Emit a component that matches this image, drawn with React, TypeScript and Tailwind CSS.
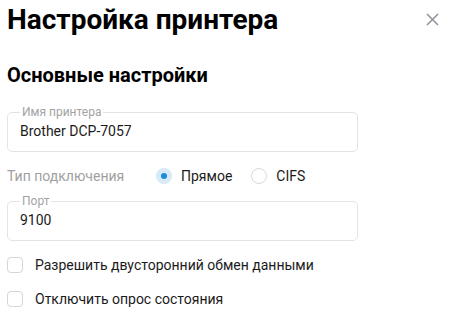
import React from 'react';

const font = { fontFamily: 'Roboto, "Noto Sans", sans-serif' };

function OutlinedField({ label, value }: { label: string; value: string }) {
  return (
    <fieldset className="w-[351px] h-[47px] border border-[#e3e3e3] rounded-[5px] px-[12px] m-0">
      <legend className="px-[2px] text-[12px] leading-[14px] text-[#a3a3a3]">{label}</legend>
      <div className="mt-[2px] text-[14px] leading-[20px] text-[#1b1b1b]">{value}</div>
    </fieldset>
  );
}

function Radio({ checked, label }: { checked?: boolean; label: string }) {
  return (
    <label className="flex items-center gap-[9px]">
      {checked ? (
        <span className="w-[16px] h-[16px] rounded-full bg-[#d6eaf8] flex items-center justify-center">
          <span className="w-[6px] h-[6px] rounded-full bg-[#1a8ad9]" />
        </span>
      ) : (
        <span className="w-[16px] h-[16px] rounded-full border border-[#d9d9d9] bg-white" />
      )}
      <span className="text-[14px] text-[#1b1b1b]">{label}</span>
    </label>
  );
}

function Checkbox({ label }: { label: string }) {
  return (
    <label className="flex items-center gap-[12px] h-[16px]">
      <span className="w-[16px] h-[16px] rounded-[4px] border border-[#d6d6d6] bg-white" />
      <span className="text-[14px] text-[#1b1b1b]">{label}</span>
    </label>
  );
}

export default function App() {
  return (
    <div className="w-[450px] h-[320px] bg-white overflow-hidden pl-[7px]" style={font}>
      <div className="flex items-center justify-between h-[36px] mt-[2px] pr-[11px]">
        <h1 className="text-[28px] leading-[36px] font-bold text-black">Настройка принтера</h1>
        <svg width="13" height="13" viewBox="0 0 13 13" className="text-[#8d9196] -mt-[1px]">
          <path d="M1 1L12 12M12 1L1 12" stroke="currentColor" strokeWidth="1.5" />
        </svg>
      </div>

      <h2 className="mt-[23px] text-[20px] leading-[28px] font-bold text-black">Основные настройки</h2>

      <div className="mt-[16px]">
        <OutlinedField label="Имя принтера" value="Brother DCP-7057" />
      </div>

      <div className="flex items-center h-[24px] mt-[12px]">
        <span className="w-[149px] text-[14px] text-[#a0a0a0]">Тип подключения</span>
        <div className="flex items-center gap-[19px]">
          <Radio checked label="Прямое" />
          <Radio label="CIFS" />
        </div>
      </div>

      <div className="mt-[6px]">
        <OutlinedField label="Порт" value="9100" />
      </div>

      <div className="mt-[16px] flex flex-col gap-[18px]">
        <Checkbox label="Разрешить двусторонний обмен данными" />
        <Checkbox label="Отключить опрос состояния" />
      </div>
    </div>
  );
}
